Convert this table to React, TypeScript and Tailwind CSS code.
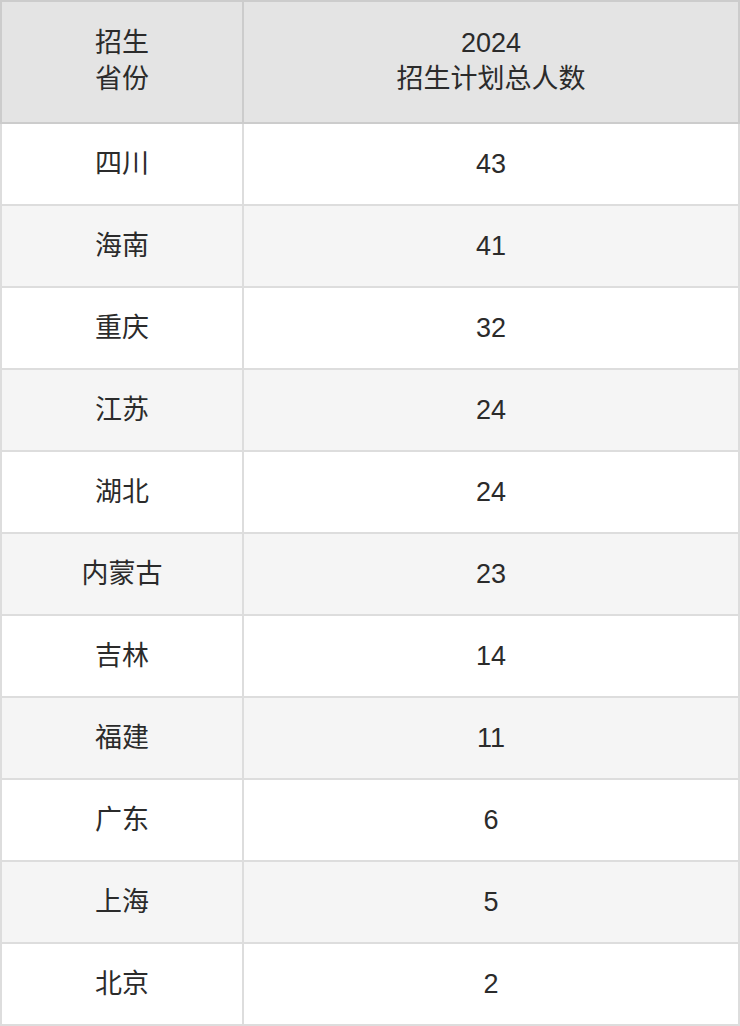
const rows: [string, number][] = [
  ['四川', 43],
  ['海南', 41],
  ['重庆', 32],
  ['江苏', 24],
  ['湖北', 24],
  ['内蒙古', 23],
  ['吉林', 14],
  ['福建', 11],
  ['广东', 6],
  ['上海', 5],
  ['北京', 2],
];

export default function App() {
  return (
    <div className="w-[740px] bg-white text-[#2b2b2b] font-['Liberation_Sans','Noto_Sans_CJK_SC',sans-serif]">
      <table className="w-full border-collapse table-fixed text-[27px] leading-[36px]">
        <colgroup>
          <col className="w-[242px]" />
          <col />
        </colgroup>
        <thead>
          <tr className="bg-[#e4e4e4] h-[122px]">
            <th className="border-2 border-[#cccccc] font-normal text-center pb-[3px]">
              招生
              <br />
              省份
            </th>
            <th className="border-2 border-[#cccccc] font-normal text-center pb-[3px]">
              2024
              <br />
              招生计划总人数
            </th>
          </tr>
        </thead>
        <tbody>
          {rows.map(([name, count], i) => (
            <tr key={name} className={`h-[82px] ${i % 2 === 1 ? 'bg-[#f5f5f5]' : 'bg-white'}`}>
              <td className="border-2 border-[#dddddd] text-center">{name}</td>
              <td className="border-2 border-[#dddddd] text-center">{count}</td>
            </tr>
          ))}
        </tbody>
      </table>
    </div>
  );
}
